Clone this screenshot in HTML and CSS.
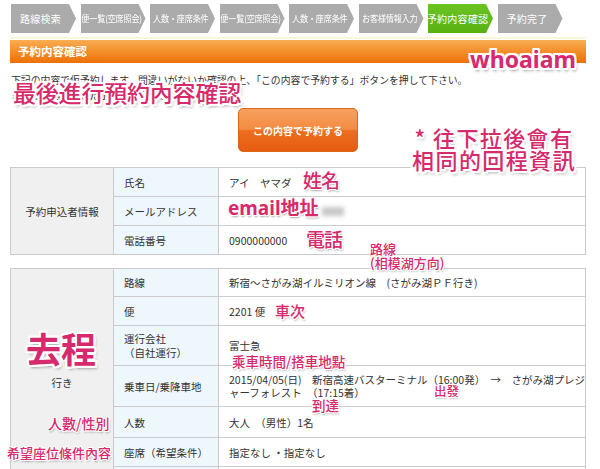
FILE: index.html
```html
<!DOCTYPE html>
<html lang="ja">
<head>
<meta charset="utf-8">
<title>予約内容確認</title>
<link rel="stylesheet" href="styles.css">
</head>
<body>
<div class="page">
  <nav class="steps">
    <div class="step wide"><span>路線検索</span></div>
    <div class="step"><span>便一覧(空席照会)</span></div>
    <div class="step"><span>人数・座席条件</span></div>
    <div class="step"><span>便一覧(空席照会)</span></div>
    <div class="step"><span>人数・座席条件</span></div>
    <div class="step"><span>お客様情報入力</span></div>
    <div class="step wide current"><span>予約内容確認</span></div>
    <div class="step wide"><span>予約完了</span></div>
  </nav>
  <div class="rule"></div>
  <h2 class="bar">予約内容確認</h2>
  <p class="intro">下記の内容で仮予約します。間違いがないか確認の上、「この内容で予約する」ボタンを押して下さい。<br>※この段階ではまだ予約は完了しません。</p>
  <div class="btn-row"><a class="btn">この内容で予約する</a></div>

  <table class="info">
    <tr class="r29">
      <th class="group" rowspan="3">予約申込者情報</th>
      <td class="label">氏名</td>
      <td class="value">アイ　ヤマダ</td>
    </tr>
    <tr class="r29">
      <td class="label">メールアドレス</td>
      <td class="value"></td>
    </tr>
    <tr class="r29">
      <td class="label">電話番号</td>
      <td class="value">0900000000</td>
    </tr>
  </table>

  <table class="info trip">
    <tr class="r28">
      <th class="group" rowspan="7">行き</th>
      <td class="label">路線</td>
      <td class="value">新宿～さがみ湖イルミリオン線　(さがみ湖ＰＦ行き)</td>
    </tr>
    <tr class="r29">
      <td class="label">便</td>
      <td class="value">2201 便</td>
    </tr>
    <tr class="r40">
      <td class="label"><span class="ln">運行会社</span><span class="ln">（自社運行）</span></td>
      <td class="value">富士急</td>
    </tr>
    <tr class="r41">
      <td class="label">乗車日/乗降車地</td>
      <td class="value"><span class="ln">2015/04/05(日)　新宿高速バスターミナル（16:00発）　→　さがみ湖プレジ</span><span class="ln">ャーフォレスト　（17:15着）</span></td>
    </tr>
    <tr class="r31">
      <td class="label">人数</td>
      <td class="value">大人　（男性）1名</td>
    </tr>
    <tr class="r29">
      <td class="label">座席（希望条件）</td>
      <td class="value">指定なし ・指定なし</td>
    </tr>
    <tr class="r29">
      <td class="label">運賃</td>
      <td class="value">1,400円</td>
    </tr>
  </table>

  <div class="note logo">whoaiam</div>
  <div class="note big1">最後進行預約內容確認</div>
  <div class="note big2">* 往下拉後會有<br>相同的回程資訊</div>
  <div class="note n-name">姓名</div>
  <div class="note n-mail">email地址</div>
  <div class="blur"></div>
  <div class="note n-tel">電話</div>
  <div class="note n-route">路線<br>(相模湖方向)</div>
  <div class="note n-bus">車次</div>
  <div class="note n-go">去程</div>
  <div class="note n-time">乘車時間/搭車地點</div>
  <div class="note n-dep">出發</div>
  <div class="note n-arr">到達</div>
  <div class="note n-pax">人數/性別</div>
  <div class="note n-seat">希望座位條件內容</div>
</div>
</body>
</html>
```
FILE: styles.css
```css
* { box-sizing: border-box; }
html, body { margin: 0; padding: 0; background: #fff; }
body {
  font-family: "Noto Sans CJK JP", "Noto Sans", sans-serif;
  color: #333;
  overflow: hidden;
}
.page {
  position: relative;
  width: 600px;
  padding: 4px 14px 0 10px;
}
.steps {
  display: flex;
  gap: 4.5px;
  padding-left: 1px;
  height: 29px;
}
.step {
  width: 65px;
  height: 29px;
  background: #ababab;
  color: #fff;
  font-size: 9px;
  letter-spacing: -0.2px;
  display: flex;
  align-items: center;
  justify-content: center;
  padding-right: 3px;
  white-space: nowrap;
  clip-path: polygon(0 0, calc(100% - 7px) 0, 100% 50%, calc(100% - 7px) 100%, 0 100%);
}
.step span { display: inline-block; transform: scaleX(0.9); }
.step.wide { font-size: 10px; letter-spacing: 0.2px; padding-right: 6px; }
.step.wide span { transform: none; }
.step.current { background: linear-gradient(#6cc423, #58b012); }
.rule {
  margin-top: 4px;
  height: 2px;
  background: #fcf5d6;
}
.bar {
  margin: 1px 0 0;
  height: 23px;
  padding-left: 8px;
  font-size: 11.5px;
  font-weight: 700;
  line-height: 23px;
  color: #fff;
  background: linear-gradient(#f9ad52, #f38b26 55%, #ec7009);
}
.intro {
  margin: 10px 0 0 1px;
  font-size: 9.85px;
  line-height: 15px;
  color: #333;
  white-space: nowrap;
}
.btn-row {
  display: flex;
  justify-content: center;
  margin-top: 5px;
}
.btn {
  width: 120px;
  height: 44px;
  border-radius: 5px;
  border: 1px solid #dc6618;
  background: linear-gradient(#f7a060 0%, #f38c42 48%, #ec6e20 52%, #e55c10 100%);
  color: #fff;
  font-size: 10px;
  font-weight: 700;
  display: flex;
  align-items: center;
  justify-content: center;
}
.info {
  width: 576px;
  border-collapse: collapse;
  margin-top: 15px;
  font-size: 10.5px;
  table-layout: fixed;
}
.info.trip { margin-top: 13px; }
.info th, .info td {
  border: 1px solid #cbcbcb;
  padding: 0 10px;
  font-weight: 400;
  text-align: left;
  vertical-align: middle;
  line-height: 13px;
}
.info .group {
  width: 103px;
  background: #f0f0f0;
  text-align: center;
  padding: 0;
}
.info .label { width: 105px; background: #eef7fb; }
.info .value { background: #fff; }
.ln { display: block; height: 13.5px; line-height: 13.5px; overflow: visible; white-space: nowrap; }
.r28 { height: 28px; }
.r29 { height: 29px; }
.r31 { height: 31px; }
.r40 { height: 40px; }
.r41 { height: 41px; }

.note {
  position: absolute;
  font-family: "Noto Sans CJK TC", "Noto Sans", sans-serif;
  font-weight: 500;
  color: #d62a6c;
  line-height: 1;
  white-space: nowrap;
  text-shadow:
    1px 0 #fff, -1px 0 #fff, 0 1px #fff, 0 -1px #fff,
    1px 1px #fff, -1px -1px #fff, 1px -1px #fff, -1px 1px #fff,
    1px 2px 2px rgba(0,0,0,0.35);
}
.logo {
  left: 470px; top: 48px;
  font-family: "Noto Sans", sans-serif;
  font-weight: 700;
  font-size: 23px;
  text-shadow:
    2px 0 #fff, -2px 0 #fff, 0 2px #fff, 0 -2px #fff,
    2px 2px #fff, -2px -2px #fff, 2px -2px #fff, -2px 2px #fff,
    2px 3px 3px rgba(0,0,0,0.4);
}
.big1 {
  left: 13px; top: 81px;
  font-size: 23px;
  letter-spacing: -0.2px;
  text-shadow:
    2px 0 #fff, -2px 0 #fff, 0 2px #fff, 0 -2px #fff,
    2px 2px #fff, -2px -2px #fff, 2px -2px #fff, -2px 2px #fff,
    2px 3px 3px rgba(0,0,0,0.35);
}
.big2 {
  left: 405px; top: 126px;
  width: 178px;
  text-align: center;
  font-size: 22px;
  letter-spacing: 1.4px;
  line-height: 22px;
  text-shadow:
    2px 0 #fff, -2px 0 #fff, 0 2px #fff, 0 -2px #fff,
    2px 2px #fff, -2px -2px #fff, 2px -2px #fff, -2px 2px #fff,
    2px 3px 3px rgba(0,0,0,0.35);
}
.n-name { left: 303px; top: 170px; font-size: 19px; letter-spacing: -1px; }
.n-mail { left: 228px; top: 199px; font-size: 19px; font-weight: 700; font-family: "Noto Sans", "Noto Sans CJK TC", sans-serif; }
.blur {
  position: absolute;
  left: 322px; top: 207px;
  width: 22px; height: 9px;
  background: #c8c8c8;
  filter: blur(2px);
}
.n-tel { left: 306px; top: 229px; font-size: 19px; letter-spacing: -1px; }
.n-route { left: 370px; top: 242px; font-size: 13px; line-height: 14px; }
.n-bus { left: 275px; top: 303px; font-size: 15px; }
.n-go {
  left: 26px; top: 330px;
  font-size: 35px; font-weight: 700;
  text-shadow:
    2px 0 #fff, -2px 0 #fff, 0 2px #fff, 0 -2px #fff,
    2px 2px #fff, -2px -2px #fff, 2px -2px #fff, -2px 2px #fff,
    2px 3px 3px rgba(0,0,0,0.35);
}
.n-time { left: 232px; top: 355px; font-size: 13.5px; }
.n-dep { left: 434px; top: 385px; font-size: 12.5px; }
.n-arr { left: 312px; top: 399px; font-size: 13.5px; }
.n-pax { left: 48px; top: 416px; font-size: 14px; }
.n-seat { left: 7px; top: 446px; font-size: 13px; }
```
